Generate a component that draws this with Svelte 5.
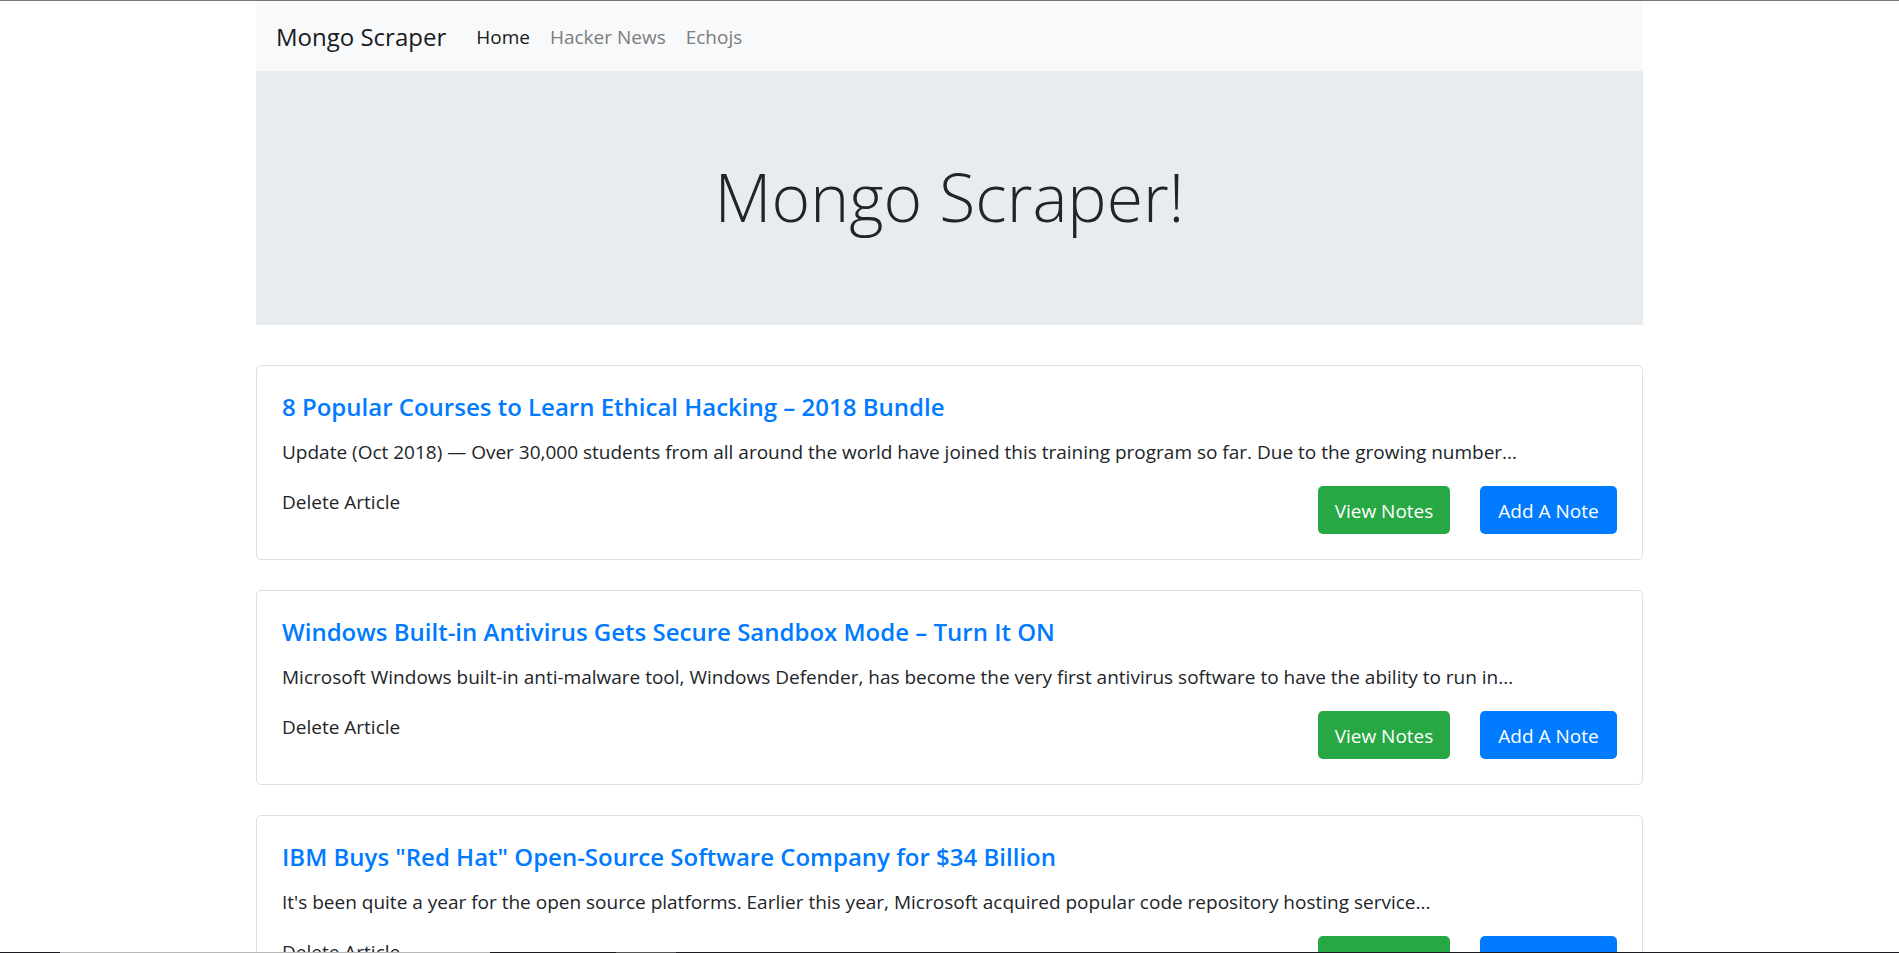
<script>
  const navLinks = [
    { label: 'Home', active: true },
    { label: 'Hacker News', active: false },
    { label: 'Echojs', active: false }
  ];

  const articles = [
    {
      title: '8 Popular Courses to Learn Ethical Hacking – 2018 Bundle',
      summary:
        'Update (Oct 2018) — Over 30,000 students from all around the world have joined this training program so far. Due to the growing number...'
    },
    {
      title: 'Windows Built-in Antivirus Gets Secure Sandbox Mode – Turn It ON',
      summary:
        'Microsoft Windows built-in anti-malware tool, Windows Defender, has become the very first antivirus software to have the ability to run in...'
    },
    {
      title: 'IBM Buys "Red Hat" Open-Source Software Company for $34 Billion',
      summary:
        "It's been quite a year for the open source platforms. Earlier this year, Microsoft acquired popular code repository hosting service..."
    }
  ];
</script>

<div class="window">
  <div class="page">
    <div class="container">
      <nav class="navbar">
        <a class="brand" href="#top">Mongo Scraper</a>
        <ul class="links">
          {#each navLinks as link}
            <li><a href="#top" class:active={link.active}>{link.label}</a></li>
          {/each}
        </ul>
      </nav>

      <header class="hero">
        <h1>Mongo Scraper!</h1>
      </header>

      <main class="articles">
        {#each articles as article}
          <article class="card">
            <h2><a href="#top">{article.title}</a></h2>
            <p>{article.summary}</p>
            <div class="actions">
              <a class="delete" href="#top">Delete Article</a>
              <div class="buttons">
                <button type="button" class="view">View Notes</button>
                <button type="button" class="add">Add A Note</button>
              </div>
            </div>
          </article>
        {/each}
      </main>
    </div>
  </div>
  <div class="edge"></div>
</div>

<style>
  :global(body) {
    margin: 0;
    background: #fff;
  }

  .window {
    box-sizing: border-box;
    display: flex;
    flex-direction: column;
    height: 100vh;
    border-top: 1px solid #77767b;
    color: #212529;
    font: 19px/32px 'Segoe UI', 'Open Sans', sans-serif;
  }

  .page {
    flex: 1;
    min-height: 0;
    overflow-y: auto;
    scrollbar-width: none;
  }

  .container {
    max-width: 1387px;
    margin: 0 auto;
  }

  a {
    color: inherit;
    text-decoration: none;
  }

  .navbar {
    display: flex;
    align-items: center;
    gap: 30px;
    padding: 20px 20px 18px;
    background: #f8f9fb;
  }

  .brand {
    color: #1a1b1b;
    font-size: 24px;
  }

  .links {
    display: flex;
    gap: 20px;
    margin: 0;
    padding: 0;
    list-style: none;
    color: #7c7d7d;
  }

  .links .active {
    color: #191919;
  }

  .hero {
    padding: 78px 40px 82px;
    background: #e8ecef;
    text-align: center;
  }

  h1 {
    margin: 0;
    font-size: 66px;
    font-weight: 300;
    line-height: 94px;
  }

  .articles {
    display: grid;
    gap: 30px;
    padding: 40px 0;
  }

  .card {
    padding: 25px;
    border: 1px solid #dfdfdf;
    border-radius: 5px;
  }

  h2 {
    margin: 0 0 13px;
    color: #007bff;
    font-size: 24px;
    font-weight: 600;
    line-height: 32px;
  }

  p {
    margin: 0 0 18px;
  }

  .actions,
  .buttons {
    display: flex;
    justify-content: space-between;
    align-items: flex-start;
    gap: 30px;
  }

  button {
    height: 48px;
    padding: 2px 16px 0;
    border: 0;
    border-radius: 5px;
    color: #fff;
    font: inherit;
  }

  .view {
    min-width: 132px;
    background: #28a745;
  }

  .add {
    min-width: 137px;
    background: #007bff;
  }

  .edge {
    height: 1px;
    background: linear-gradient(
      to right,
      #1c1c20 60px,
      #b8b8b8 60px 490px,
      #1c1c20 490px 616px,
      #555 616px 676px,
      #1c1c20 676px
    );
  }
</style>
